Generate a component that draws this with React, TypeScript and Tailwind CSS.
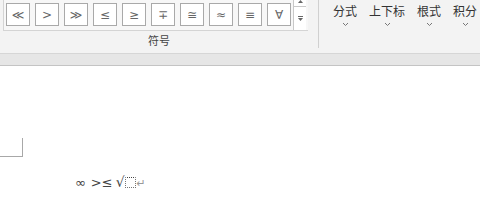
import React from "react";

const symbols = ["≪", ">", "≫", "≤", "≥", "∓", "≅", "≈", "≡", "∀"];
const tools = ["分式", "上下标", "根式", "积分"];

function Chevron() {
  return (
    <svg width="7" height="5" viewBox="0 0 7 5" className="text-[#777]">
      <path d="M1 1 L3.5 3.5 L6 1" fill="none" stroke="currentColor" strokeWidth="1" />
    </svg>
  );
}

export default function App() {
  return (
    <div
      className="w-[480px] h-[219px] overflow-hidden bg-white text-[#444]"
      style={{ fontFamily: '"Segoe UI", "Noto Sans CJK SC", sans-serif' }}
    >
      {/* Ribbon */}
      <div className="h-[54px] bg-[#f3f3f3] border-b border-[#d6d6d6] flex">
        <div className="w-[318px] flex flex-col">
          <div className="ml-[3px] w-[305px] h-[31px] border-l border-b border-[#d4d4d4] bg-[#f7f7f7] flex">
            <div className="flex-1 flex gap-[5px] pl-[2px] pt-[3px]">
              {symbols.map((s) => (
                <div
                  key={s}
                  className="w-[24px] h-[23px] bg-white border border-[#a9a9a9] flex items-center justify-center text-[12px] leading-none text-[#666]"
                  style={{ fontFamily: '"DejaVu Sans", sans-serif' }}
                >
                  {s}
                </div>
              ))}
            </div>
            <div className="w-[13px] flex flex-col border-l border-[#c8c8c8] bg-white">
              <div className="h-[7px] border-b border-[#c8c8c8] flex items-start justify-center">
                <svg width="5" height="3" viewBox="0 0 5 3">
                  <path d="M0 3 L2.5 0 L5 3 Z" fill="#666" />
                </svg>
              </div>
              <div className="flex-1 flex flex-col items-center justify-center gap-[1px]">
                <div className="w-[5px] h-px bg-[#666]" />
                <svg width="5" height="3" viewBox="0 0 5 3">
                  <path d="M0 0 L2.5 3 L5 0 Z" fill="#666" />
                </svg>
              </div>
            </div>
            <div className="w-[2px]" />
          </div>
          <div className="flex-1 flex items-center justify-center text-[11px] text-[#444] pb-[3px]">
            符号
          </div>
        </div>
        <div className="w-px h-[48px] bg-[#d0d0d0]" />
        <div className="flex pl-[14px] gap-[12px] pt-[3px]">
          {tools.map((t) => (
            <div key={t} className="flex flex-col items-center">
              <div className="text-[12px] leading-[16px] text-[#333]">{t}</div>
              <div className="mt-[3px]">
                <Chevron />
              </div>
            </div>
          ))}
        </div>
      </div>
      {/* band under ribbon */}
      <div className="h-[12px] bg-[#e6e6e6] border-b border-[#c4c4c4]" />
      {/* document */}
      <div className="pt-[72px]">
        <div className="w-[23px] h-[19px] border-r border-b border-[#a8a8a8]" />
        <div
          className="mt-[18px] ml-[75px] flex items-end text-[13px] leading-none text-[#444]"
          style={{ fontFamily: '"DejaVu Sans", serif' }}
        >
          <span className="text-[13px]">∞</span>
          <span className="ml-[5px]">&gt;≤</span>
          <span className="ml-[3px] text-[14px]">√</span>
          <span className="w-[11px] h-[11px] border border-dotted border-[#777] border-t-[#444] mb-[1px]" />
          <span className="text-[11px] text-[#999] ml-px">↵</span>
        </div>
      </div>
    </div>
  );
}
